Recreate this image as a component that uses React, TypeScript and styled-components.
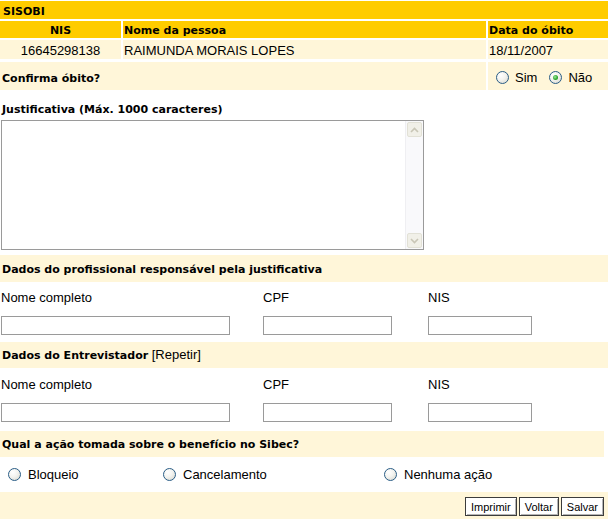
import * as React from 'react'
import styled, { createGlobalStyle } from 'styled-components'

const YELLOW = '#FFCC00'
const CREAM = '#FFF6D9'
const BOLD_FONT = `'DejaVu Sans', Verdana, sans-serif`

const GlobalStyle = createGlobalStyle`
  html, body {
    margin: 0;
    padding: 0;
    background: #fff;
  }
  body {
    font-family: 'Liberation Sans', Arial, sans-serif;
    font-size: 13px;
    color: #000;
  }
`

const Page = styled.div`
  width: 608px;
  padding-top: 1px;
`

const InfoGrid = styled.div`
  display: grid;
  grid-template-columns: 121px 1fr 120px;
  column-gap: 2px;
  row-gap: 2px;
`

const TitleBar = styled.div`
  grid-column: 1 / -1;
  height: 14px;
  padding: 4px 3px 0;
  background: ${YELLOW};
  font: bold 11px/13px ${BOLD_FONT};
`

const HeadCell = styled.div<{ $center?: boolean }>`
  height: 14px;
  padding: 3px 1px 0;
  background: ${YELLOW};
  font: bold 11px/13px ${BOLD_FONT};
  text-align: ${(p) => (p.$center ? 'center' : 'left')};
`

const DataCell = styled.div<{ $center?: boolean }>`
  height: 16px;
  padding: 3px 1px 0;
  background: ${CREAM};
  line-height: 15px;
  text-align: ${(p) => (p.$center ? 'center' : 'left')};
  white-space: nowrap;
`

const ConfirmRow = styled.div`
  display: grid;
  grid-template-columns: 486px 1fr;
  column-gap: 2px;
  margin-top: 3px;
  height: 28px;
`

const QuestionCell = styled.div`
  background: ${CREAM};
  padding: 10px 2px 0;
  font: bold 11px/13px ${BOLD_FONT};
`

const ChoiceCell = styled.div`
  background: ${CREAM};
  display: flex;
  align-items: center;
  gap: 12px;
  padding: 3px 0 0 8px;
`

const RadioOption = styled.label<{ $gap?: number }>`
  display: inline-flex;
  align-items: center;
  gap: ${(p) => p.$gap ?? 6}px;
  line-height: 15px;
  white-space: nowrap;
`

const RadioDot = styled.span<{ $checked?: boolean }>`
  flex: none;
  width: 13px;
  height: 13px;
  box-sizing: border-box;
  border-radius: 50%;
  border: 1px solid #2a5d86;
  background: radial-gradient(circle at 35% 30%, #ffffff 0%, #f3f3ef 45%, #d4d4cb 100%);
  display: inline-flex;
  align-items: center;
  justify-content: center;

  &::after {
    content: '';
    display: ${(p) => (p.$checked ? 'block' : 'none')};
    width: 5px;
    height: 5px;
    border-radius: 50%;
    background: radial-gradient(circle at 40% 40%, #9be69b 0%, #2aa52a 60%, #1d8a1d 100%);
  }
`

const BlockLabel = styled.div`
  margin-top: 13px;
  padding-left: 2px;
  font: bold 11px/13px ${BOLD_FONT};
`

const TextBox = styled.div`
  display: flex;
  box-sizing: border-box;
  width: 423px;
  height: 130px;
  margin: 4px 0 0 1px;
  border: 1px solid #9a9a9a;
  background: #fff;
`

const TextInput = styled.textarea`
  flex: 1;
  border: none;
  outline: none;
  resize: none;
  padding: 2px;
  font: 13px 'Liberation Sans', Arial, sans-serif;
  background: transparent;
`

const ScrollTrack = styled.div`
  flex: none;
  width: 17px;
  display: flex;
  flex-direction: column;
  justify-content: space-between;
  padding: 1px 0;
  background: #f9f9fb;
  border-left: 1px solid #efeff2;
`

const ScrollButton = styled.div`
  width: 15px;
  height: 15px;
  margin-left: 1px;
  box-sizing: border-box;
  border: 1px solid #e2e1d6;
  border-radius: 2px;
  background: #f1f0e8;
  display: flex;
  align-items: center;
  justify-content: center;
`

const SectionBar = styled.div<{ $top: number; $height: number; $width?: number }>`
  box-sizing: border-box;
  width: ${(p) => p.$width ?? 608}px;
  height: ${(p) => p.$height}px;
  padding: ${(p) => p.$top}px 2px 0;
  background: ${CREAM};
  line-height: 15px;
  white-space: nowrap;
`

const SectionTitle = styled.span`
  font: bold 11px ${BOLD_FONT};
`

const FieldGrid = styled.div<{ $top: number }>`
  display: grid;
  grid-template-columns: 262px 165px 1fr;
  row-gap: 11px;
  margin-top: ${(p) => p.$top}px;
  padding-left: 1px;
  line-height: 15px;
`

const Field = styled.input<{ $width: number }>`
  box-sizing: border-box;
  width: ${(p) => p.$width}px;
  height: 19px;
  margin: 0;
  padding: 1px 2px;
  border: 1px solid #9a9a9a;
  background: #fff;
  font: 13px 'Liberation Sans', Arial, sans-serif;
  outline: none;
`

const ActionRow = styled.div`
  display: grid;
  grid-template-columns: 155px 221px 1fr;
  align-items: center;
  height: 35px;
  padding-left: 8px;
`

const BottomBar = styled.div`
  box-sizing: border-box;
  height: 27px;
  display: flex;
  justify-content: flex-end;
  gap: 2px;
  padding: 5px 4px 0 0;
  background: ${CREAM};
`

const Button = styled.button`
  height: 19px;
  margin: 0;
  padding: 0 5px;
  border: 1px solid #3c3c3c;
  box-shadow: inset 1px 1px 0 #fff, inset -1px -1px 0 #b5b5b5;
  background: #fff;
  font: 11px 'Liberation Sans', Arial, sans-serif;
  color: #000;
  cursor: pointer;
`

const Chevron = ({ up }: { up?: boolean }) => (
  <svg width="9" height="6" viewBox="0 0 9 6">
    <path
      d={up ? 'M1 5 L4.5 1.5 L8 5' : 'M1 1 L4.5 4.5 L8 1'}
      fill="none"
      stroke="#c9c6b6"
      strokeWidth="1.6"
    />
  </svg>
)

const Radio = ({ label, checked, gap }: { label: string; checked?: boolean; gap?: number }) => (
  <RadioOption $gap={gap}>
    <RadioDot $checked={checked} />
    {label}
  </RadioOption>
)

const PersonFields = ({ top }: { top: number }) => (
  <FieldGrid $top={top}>
    <div>Nome completo</div>
    <div>CPF</div>
    <div>NIS</div>
    <Field $width={229} />
    <Field $width={129} />
    <Field $width={104} />
  </FieldGrid>
)

const App = () => (
  <Page>
    <GlobalStyle />
    <InfoGrid>
      <TitleBar>SISOBI</TitleBar>
      <HeadCell $center={true}>NIS</HeadCell>
      <HeadCell>Nome da pessoa</HeadCell>
      <HeadCell>Data do óbito</HeadCell>
      <DataCell $center={true}>16645298138</DataCell>
      <DataCell>RAIMUNDA MORAIS LOPES</DataCell>
      <DataCell>18/11/2007</DataCell>
    </InfoGrid>

    <ConfirmRow>
      <QuestionCell>Confirma óbito?</QuestionCell>
      <ChoiceCell>
        <Radio label="Sim" />
        <Radio label="Não" checked={true} />
      </ChoiceCell>
    </ConfirmRow>

    <BlockLabel>Justificativa (Máx. 1000 caracteres)</BlockLabel>
    <TextBox>
      <TextInput />
      <ScrollTrack>
        <ScrollButton>
          <Chevron up={true} />
        </ScrollButton>
        <ScrollButton>
          <Chevron />
        </ScrollButton>
      </ScrollTrack>
    </TextBox>

    <SectionBar $top={6} $height={27} style={{ marginTop: 5 }}>
      <SectionTitle>Dados do profissional responsável pela justificativa</SectionTitle>
    </SectionBar>
    <PersonFields top={8} />

    <SectionBar $top={5} $height={26} style={{ marginTop: 7 }}>
      <SectionTitle>Dados do Entrevistador</SectionTitle> [Repetir]
    </SectionBar>
    <PersonFields top={9} />

    <SectionBar $top={5} $height={26} $width={604} style={{ marginTop: 9 }}>
      <SectionTitle>Qual a ação tomada sobre o benefício no Sibec?</SectionTitle>
    </SectionBar>

    <ActionRow>
      <Radio label="Bloqueio" gap={7} />
      <Radio label="Cancelamento" gap={7} />
      <Radio label="Nenhuma ação" gap={7} />
    </ActionRow>

    <BottomBar>
      <Button>Imprimir</Button>
      <Button>Voltar</Button>
      <Button>Salvar</Button>
    </BottomBar>
  </Page>
)

export default App
